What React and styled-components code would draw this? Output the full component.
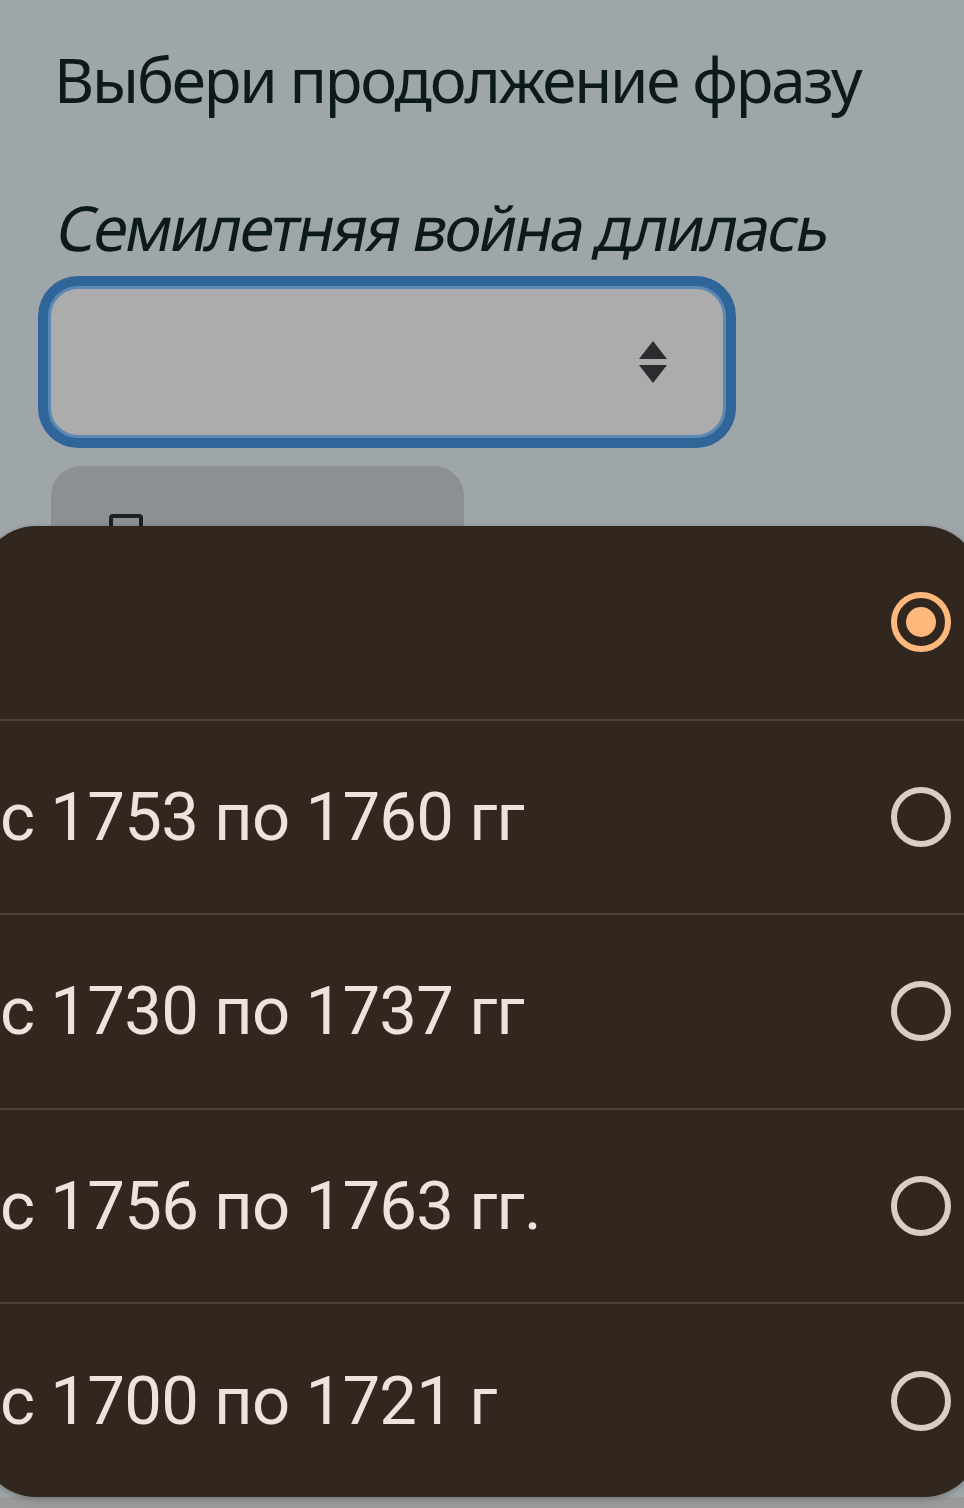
import React from "react";
import styled, { createGlobalStyle } from "styled-components";

const GlobalStyle = createGlobalStyle`
  html, body {
    margin: 0;
    padding: 0;
    background: #9ea6a9;
    overflow: hidden;
  }
  body {
    width: 964px;
    height: 1508px;
  }
`;

const Page = styled.div`
  position: relative;
  width: 964px;
  height: 1508px;
  background: linear-gradient(#9ea6a9 0, #9ea6a9 1497px, #9a9a9a 1497px);
  overflow: hidden;
`;

const Content = styled.div`
  display: flex;
  flex-direction: column;
  align-items: flex-start;
  padding: 38px 0 0 48px;
`;

const Title = styled.h1`
  margin: 0 0 0 6px;
  font-family: "Noto Sans", "Open Sans", sans-serif;
  font-weight: 400;
  font-size: 62px;
  line-height: 82px;
  color: #0d1a1c;
  letter-spacing: -2.2px;
`;

// slanted upright face, the reference italic keeps the plain "т" shape
const Question = styled(Title)`
  margin-top: 66px;
  margin-left: 2px;
  letter-spacing: -2.6px;
  transform: skewX(-11deg);
  transform-origin: left bottom;
`;

const SelectBox = styled.div`
  margin-top: 18px;
  width: 678px;
  height: 152px;
  box-sizing: border-box;
  border: 3px solid #5b89b4;
  border-radius: 30px;
  box-shadow: 0 0 0 10px #30659a;
  background: #acacac;
  display: flex;
  align-items: center;
  justify-content: flex-end;
  padding-right: 55px;
`;

const ActionButton = styled.div`
  margin-top: 28px;
  margin-left: 3px;
  width: 413px;
  height: 140px;
  border-radius: 30px;
  background: #8c8f93;
  padding: 48px 0 0 58px;
  box-sizing: border-box;
`;

const ButtonIcon = styled.div`
  width: 34px;
  height: 40px;
  border: 4px solid #1c1f24;
  border-radius: 4px;
  box-sizing: border-box;
`;

const Sheet = styled.div`
  position: absolute;
  top: 526px;
  left: -20px;
  width: 1000px;
  height: 971px;
  background: #31271f;
  border-radius: 56px;
  box-shadow: 0 2px 6px rgba(0, 0, 0, 0.25);
  display: flex;
  flex-direction: column;
  overflow: hidden;
`;

const Option = styled.div`
  flex: 1;
  display: flex;
  align-items: center;
  justify-content: space-between;
  padding: 0 29px 0 20px;
  border-top: ${({ $first }) => ($first ? "none" : "2px solid #4b4139")};
`;

const OptionText = styled.span`
  font-family: Roboto, "Liberation Sans", sans-serif;
  font-size: 67px;
  color: #eee2dc;
  letter-spacing: -0.7px;
`;

const Radio = styled.span`
  width: 60px;
  height: 60px;
  box-sizing: border-box;
  border-radius: 50%;
  border: 6px solid ${({ $checked }) => ($checked ? "#ffb87c" : "#d9cdc5")};
  display: flex;
  align-items: center;
  justify-content: center;

  &::after {
    content: "";
    display: ${({ $checked }) => ($checked ? "block" : "none")};
    width: 30px;
    height: 30px;
    border-radius: 50%;
    background: #ffb87c;
  }
`;

const SortIcon = () => (
  <svg width="30" height="44" viewBox="0 0 30 44">
    <path d="M15 1 L29 19 L1 19 Z" fill="#2a2c30" />
    <path d="M1 25 L29 25 L15 43 Z" fill="#2a2c30" />
  </svg>
);

const options = [
  "",
  "с 1753 по 1760 гг",
  "с 1730 по 1737 гг",
  "с 1756 по 1763 гг.",
  "с 1700 по 1721 г",
];

export default function App() {
  return (
    <Page>
      <GlobalStyle />
      <Content>
        <Title>Выбери продолжение фразу</Title>
        <Question>Семилетняя война длилась</Question>
        <SelectBox>
          <SortIcon />
        </SelectBox>
        <ActionButton>
          <ButtonIcon />
        </ActionButton>
      </Content>
      <Sheet>
        {options.map((text, i) => (
          <Option key={i} $first={i === 0}>
            <OptionText>{text}</OptionText>
            <Radio $checked={i === 0} />
          </Option>
        ))}
      </Sheet>
    </Page>
  );
}
